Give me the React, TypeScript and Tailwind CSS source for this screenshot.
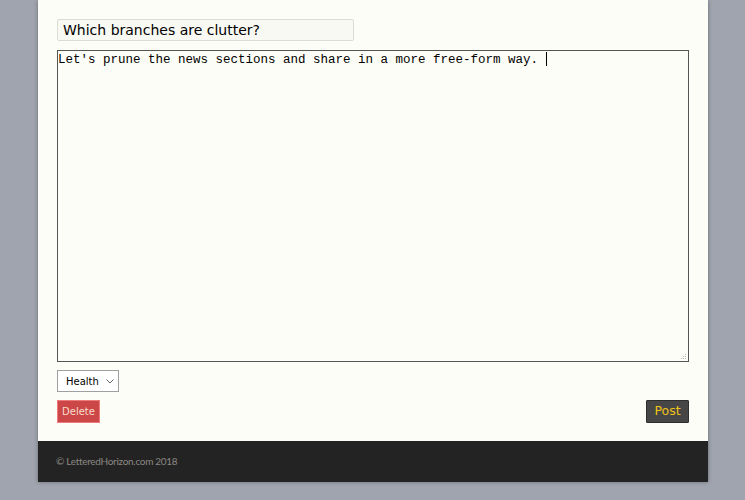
import React from "react";

export default function App() {
  return (
    <div className="w-[745px] h-[500px] bg-[#a0a4ae] overflow-hidden">
      <div className="ml-[38px] w-[670px] shadow-[0_0_4px_rgba(0,0,0,0.35)]">
        <div className="bg-[#fdfdf7] pl-[19px] pr-[19px] pt-[19px] pb-[18px]">
          <div className="w-[297px] h-[22px] border border-[#dcdcd6] rounded-[2px] bg-[#f9f9f4] pl-[5px] flex items-center text-[14px] text-black [font-family:'DejaVu_Sans',sans-serif]">
            Which branches are clutter?
          </div>
          <div className="relative mt-[9px] w-[632px] h-[312px] border border-[#555] bg-[#fdfdf7] px-[0px] pt-[1px] text-[12.5px] leading-[14px] text-black [font-family:'Liberation_Mono',monospace] whitespace-pre">
            Let's prune the news sections and share in a more free-form way. <span className="inline-block w-[1px] h-[14px] bg-black align-[-3px]"></span>
            <svg className="absolute right-[1px] bottom-[1px]" width="7" height="7" viewBox="0 0 7 7">
              <rect x="5" y="1" width="1" height="1" fill="#bbb" />
              <rect x="3" y="3" width="1" height="1" fill="#bbb" />
              <rect x="5" y="3" width="1" height="1" fill="#bbb" />
              <rect x="1" y="5" width="1" height="1" fill="#bbb" />
              <rect x="3" y="5" width="1" height="1" fill="#bbb" />
              <rect x="5" y="5" width="1" height="1" fill="#bbb" />
            </svg>
          </div>
          <div className="mt-[8px] w-[62px] h-[22px] border border-[#a0a0a0] bg-white flex items-center justify-between pl-[8px] pr-[4px] text-[10px] text-black [font-family:'DejaVu_Sans',sans-serif]">
            <span>Health</span>
            <svg width="8" height="5" viewBox="0 0 8 5">
              <path d="M0.5 0.5 L4 4 L7.5 0.5" fill="none" stroke="#666" strokeWidth="1" />
            </svg>
          </div>
          <div className="mt-[8px] flex justify-between items-center">
            <div className="w-[43px] h-[23px] bg-[#cc4747] border border-[#ee7b7b] flex items-center justify-center text-[10px] text-[#f8dccc] [font-family:'DejaVu_Sans',sans-serif]">
              Delete
            </div>
            <div className="w-[43px] h-[23px] bg-[#464646] border border-[#2e2e2e] rounded-[1px] flex items-center justify-center text-[12.5px] text-[#f0c419] [font-family:'DejaVu_Sans',sans-serif]">
              Post
            </div>
          </div>
        </div>
        <div className="h-[41px] bg-[#232323] pl-[18px] flex items-center text-[10px] tracking-[-0.3px] text-[#8b8782] [font-family:'Lato',sans-serif]">
          © LetteredHorizon.com 2018
        </div>
      </div>
    </div>
  );
}
